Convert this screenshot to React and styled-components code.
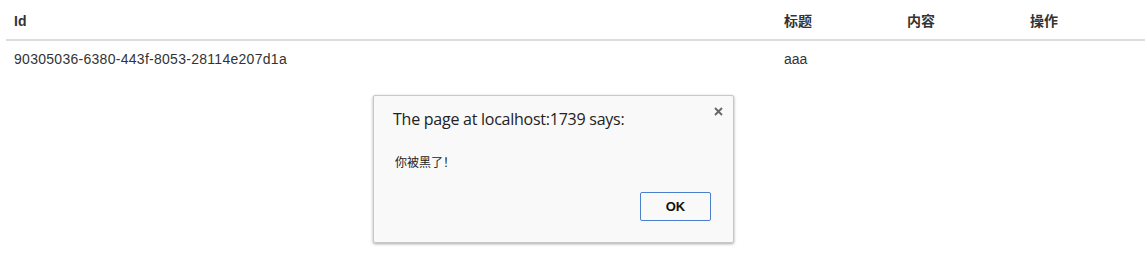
import React from "react";
import styled, { createGlobalStyle } from "styled-components";

const Global = createGlobalStyle`
  html, body { margin: 0; padding: 0; background: #fff; }
  body { font-family: "Liberation Sans", Arial, "Noto Sans CJK SC", sans-serif; font-size: 14px; color: #333; }
`;

const Page = styled.div`
  position: relative;
  width: 1147px;
  height: 259px;
  padding: 3px 2px 0 6px;
  box-sizing: border-box;
  overflow: hidden;
`;

const Table = styled.table`
  width: 1139px;
  border-collapse: collapse;
  border-spacing: 0;
  table-layout: fixed;
`;

const Th = styled.th`
  text-align: left;
  font-weight: bold;
  padding: 8px;
  line-height: 20px;
  border-bottom: 2px solid #ddd;
  width: ${(p) => p.$w}px;
  font-family: "Liberation Sans", Arial, "Noto Sans CJK SC", sans-serif;
`;

const Td = styled.td`
  padding: 8px;
  line-height: 20px;
  vertical-align: top;
  letter-spacing: ${(p) => (p.$wide ? "0.28px" : "0")};
`;

const Dialog = styled.div`
  position: absolute;
  left: 373px;
  top: 95px;
  width: 361px;
  height: 148px;
  box-sizing: border-box;
  background: #f9f9f9;
  border: 1px solid #c8c8c8;
  border-radius: 2px;
  box-shadow: 0 1px 3px rgba(0, 0, 0, 0.35);
  padding: 12px 20px 0 19px;
  display: flex;
  flex-direction: column;
  font-family: "Open Sans", "Noto Sans", sans-serif;
`;

const Title = styled.div`
  font-size: 16px;
  line-height: 22px;
  color: #222;
  letter-spacing: -0.25px;
`;

const Message = styled.div`
  margin-top: 24px;
  padding-left: 2px;
  font-family: "Noto Sans CJK SC", sans-serif;
  font-size: 12px;
  line-height: 16px;
  color: #222;
`;

const Footer = styled.div`
  margin-top: 22px;
  display: flex;
  justify-content: flex-end;
  padding-right: 2px;
`;

const OkButton = styled.button`
  width: 71px;
  height: 29px;
  box-sizing: border-box;
  background: #f9f9f9;
  border: 1px solid #4a7fcf;
  border-radius: 2px;
  font-family: "Liberation Sans", Arial, sans-serif;
  font-weight: bold;
  font-size: 13px;
  color: #111;
  padding: 0;
`;

const Close = styled.svg`
  position: absolute;
  right: 10px;
  top: 11px;
`;

export default function App() {
  return (
    <>
      <Global />
      <Page>
        <Table>
          <thead>
            <tr>
              <Th $w={754}>Id</Th>
              <Th $w={107}>标题</Th>
              <Th $w={107}>内容</Th>
              <Th $w={107}>操作</Th>
            </tr>
          </thead>
          <tbody>
            <tr>
              <Td $wide>90305036-6380-443f-8053-28114e207d1a</Td>
              <Td>aaa</Td>
              <Td></Td>
              <Td></Td>
            </tr>
          </tbody>
        </Table>
        <Dialog>
          <Close width="9" height="9" viewBox="0 0 9 9">
            <path d="M1 1 L8 8 M8 1 L1 8" stroke="#666" strokeWidth="1.8" />
          </Close>
          <Title>The page at localhost:1739 says:</Title>
          <Message>你被黑了！</Message>
          <Footer>
            <OkButton>OK</OkButton>
          </Footer>
        </Dialog>
      </Page>
    </>
  );
}
